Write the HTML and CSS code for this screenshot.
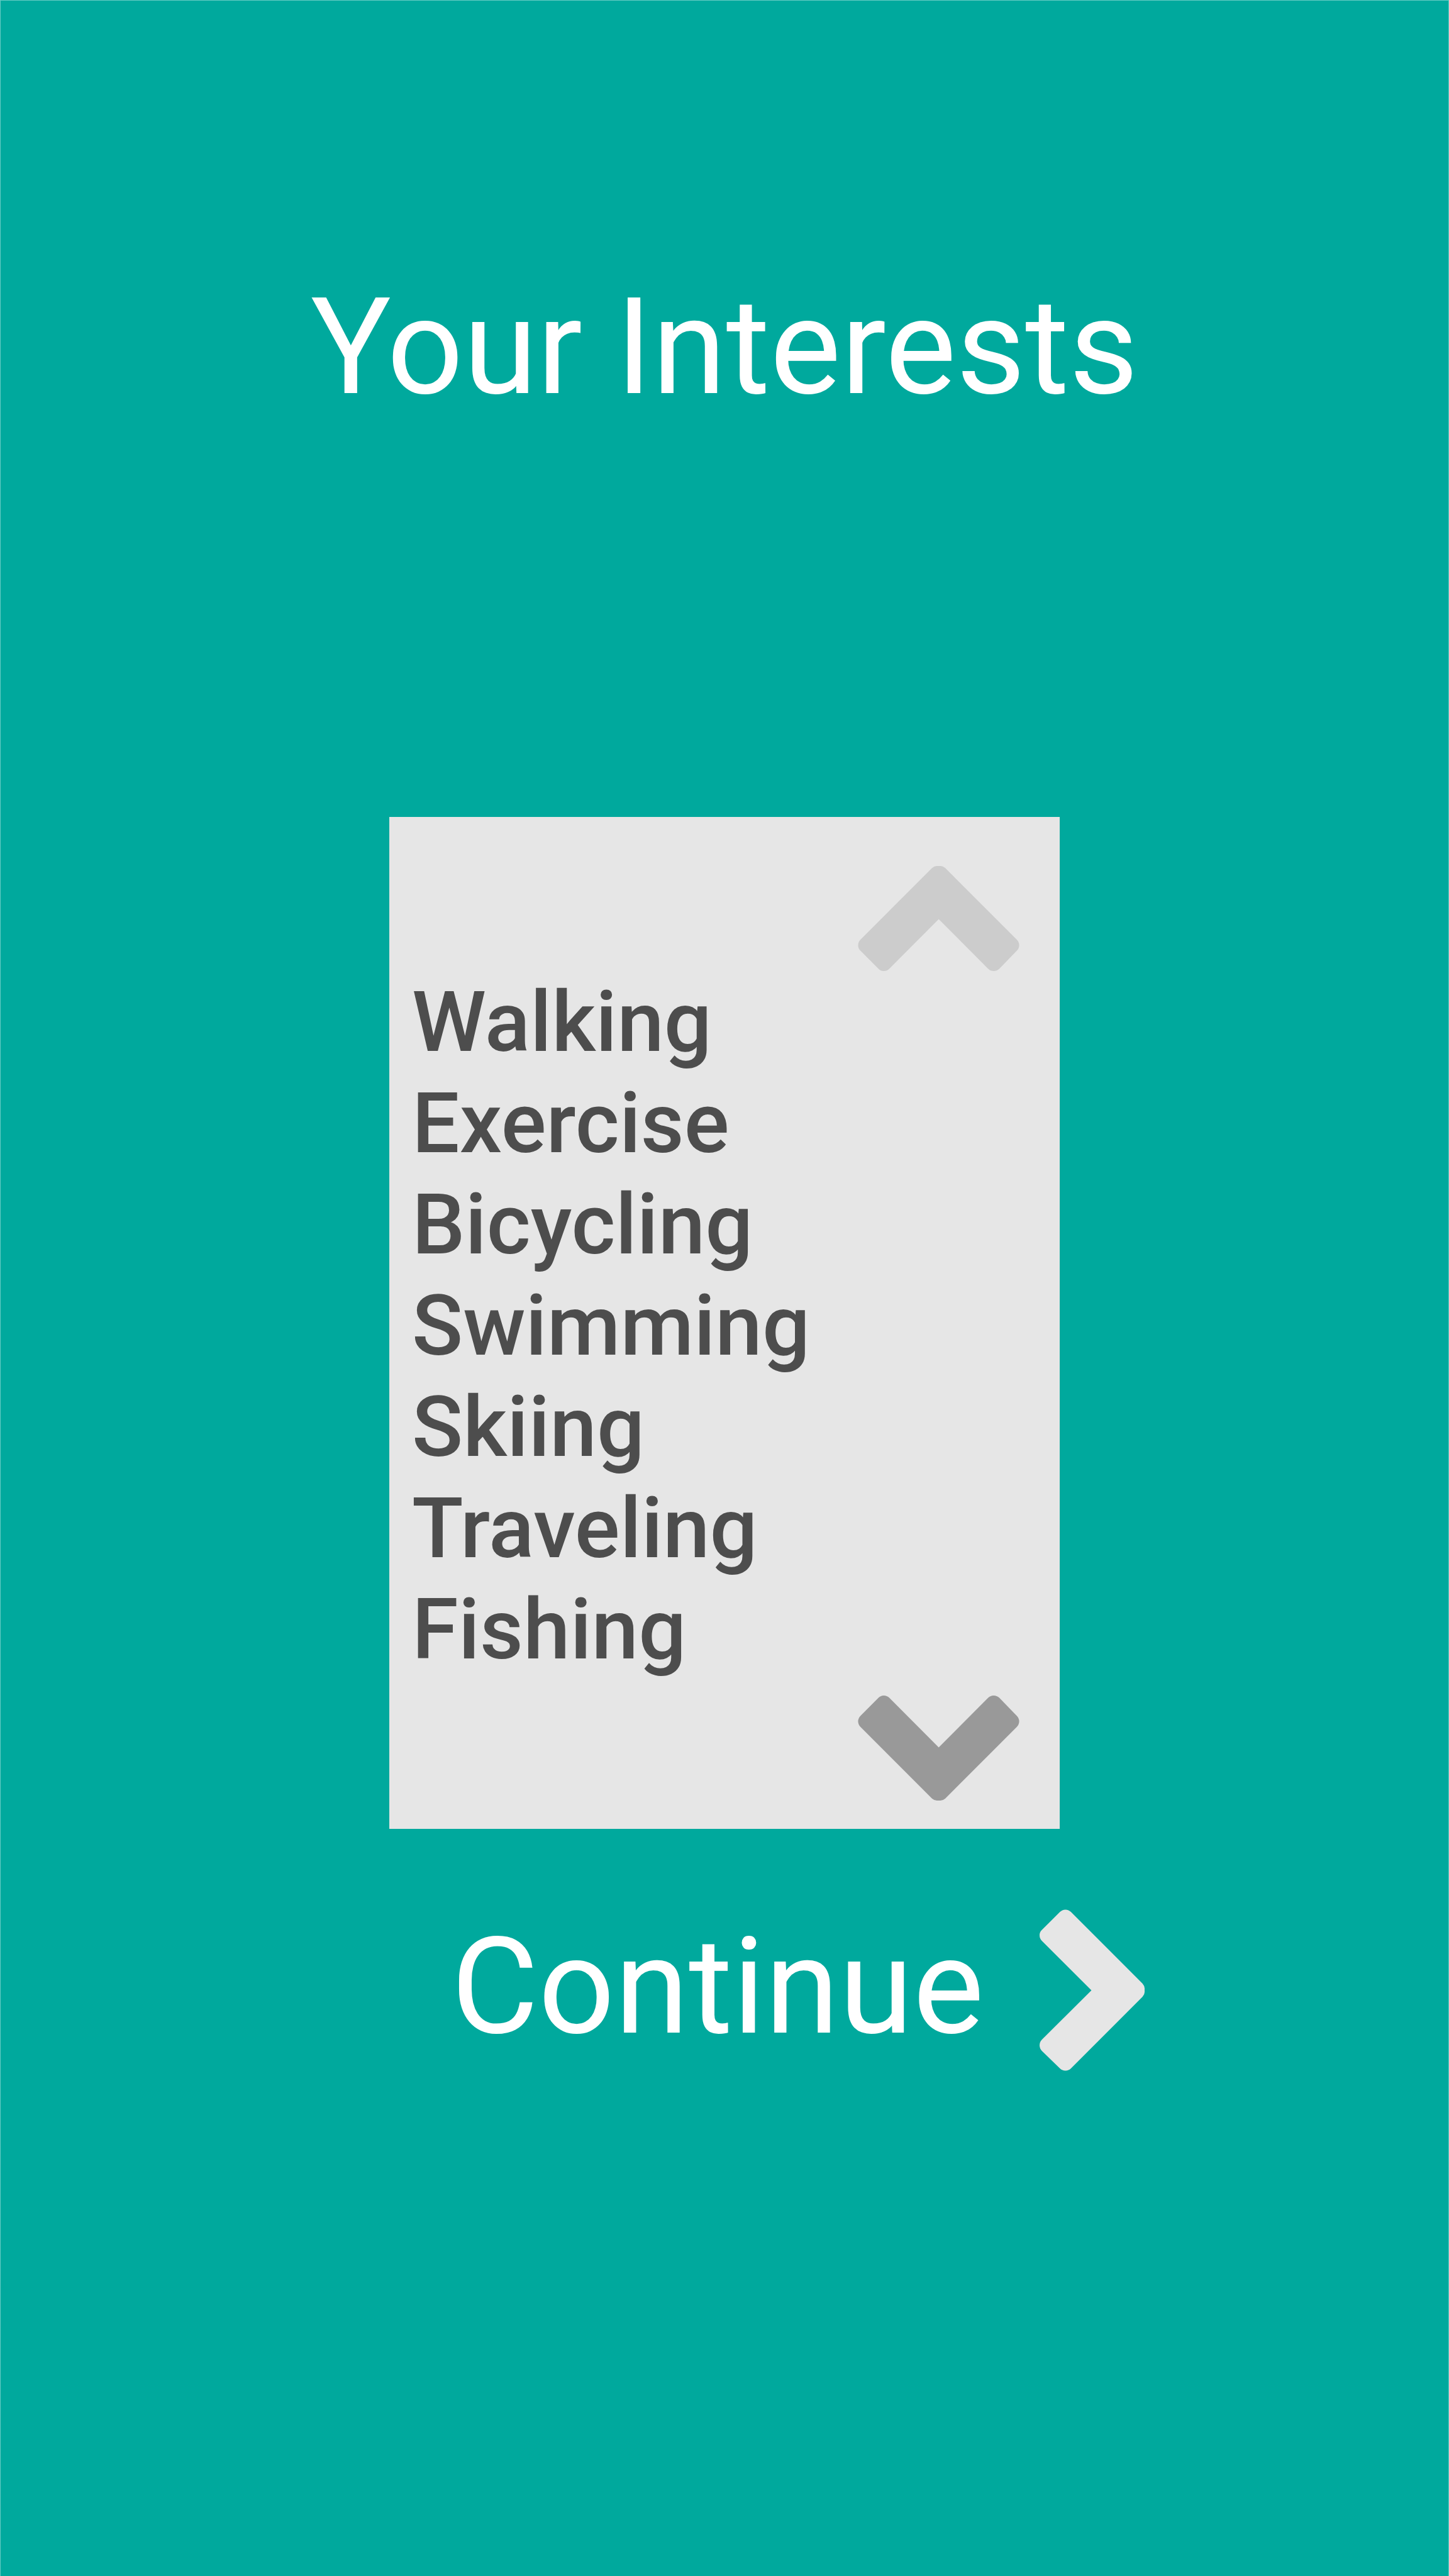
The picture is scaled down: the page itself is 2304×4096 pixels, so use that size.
FILE: index.html
```html
<!DOCTYPE html>
<html lang="en">
<head>
<meta charset="utf-8">
<meta name="viewport" content="width=device-width, initial-scale=1">
<title>Your Interests</title>
<link rel="stylesheet" href="styles.css">
</head>
<body>
<main class="screen">
  <h1 class="title">Your Interests</h1>
  <section class="panel" aria-label="Interests">
    <button class="scroll scroll-up" type="button" aria-label="Scroll up">
      <svg class="chevron" viewBox="0 0 1003 654" aria-hidden="true"><path d="M15 528Q0 513 0 493Q0 473 15 458L460 13Q475 0 490 0H513Q528 0 543 13L988 458Q1003 473 1003 493Q1003 513 988 528L879 640Q864 654 844 654Q824 654 810 640L502 331L194 640Q180 654 159 654Q141 654 127 640Z"/></svg>
    </button>
    <ul class="list">
      <li>Walking</li>
      <li>Exercise</li>
      <li>Bicycling</li>
      <li>Swimming</li>
      <li>Skiing</li>
      <li>Traveling</li>
      <li>Fishing</li>
    </ul>
    <button class="scroll scroll-down" type="button" aria-label="Scroll down">
      <svg class="chevron" viewBox="0 0 1003 654" aria-hidden="true"><path d="M15 126Q0 141 0 161Q0 181 15 196L460 641Q475 654 490 654H513Q528 654 543 641L988 196Q1003 181 1003 161Q1003 141 988 126L879 14Q864 0 844 0Q824 0 810 14L502 323L194 14Q180 0 159 0Q141 0 127 14Z"/></svg>
    </button>
  </section>
  <div class="actions">
    <button class="continue" type="button">
      <span class="continue-label">Continue</span>
      <svg class="continue-icon" viewBox="0 0 654 1003" aria-hidden="true"><path d="M126 15Q141 0 161 0Q181 0 196 15L641 460Q654 475 654 490V513Q654 528 641 543L196 988Q181 1003 161 1003Q141 1003 126 988L14 879Q0 864 0 844Q0 824 14 810L323 502L14 194Q0 180 0 159Q0 141 14 127Z"/></svg>
    </button>
  </div>
</main>
</body>
</html>
```
FILE: styles.css
```css
* {
  box-sizing: border-box;
}

body {
  margin: 0;
  background: #00a99d;
  font-family: Roboto, "Liberation Sans", sans-serif;
}

.screen {
  display: flex;
  flex-direction: column;
  align-items: center;
  min-height: 100vh;
  padding-top: 423px;
  border: 1px solid rgba(255, 255, 255, 0.4);
  border-bottom: 0;
}

.title {
  margin: 0 0 619px;
  color: #fff;
  font-size: 213px;
  font-weight: 400;
  line-height: 256px;
  text-align: center;
}

.panel {
  display: flex;
  flex-direction: column;
  width: 100%;
  max-width: 1066px;
  padding: 78px 64px 45px 36px;
  background: #e6e6e6;
}

button {
  padding: 0;
  border: 0;
  background: none;
  font: inherit;
  cursor: pointer;
}

.scroll {
  align-self: flex-end;
}

.scroll-up {
  color: #ccc;
}

.scroll-down {
  color: #999;
}

.chevron {
  display: block;
  width: 257px;
  height: 167px;
  fill: currentColor;
}

.list {
  margin: 1px 0 24px;
  padding: 0;
  list-style: none;
  color: #4d4d4d;
  font-size: 134px;
  font-weight: 500;
  line-height: 161px;
}

.actions {
  margin-top: 128px;
  padding-left: 233px;
}

.continue {
  display: flex;
  align-items: flex-start;
  gap: 88px;
  color: #fff;
  font-size: 213px;
  line-height: 246px;
}

.continue-icon {
  width: 167px;
  height: 257px;
  fill: #e6e6e6;
}
```
